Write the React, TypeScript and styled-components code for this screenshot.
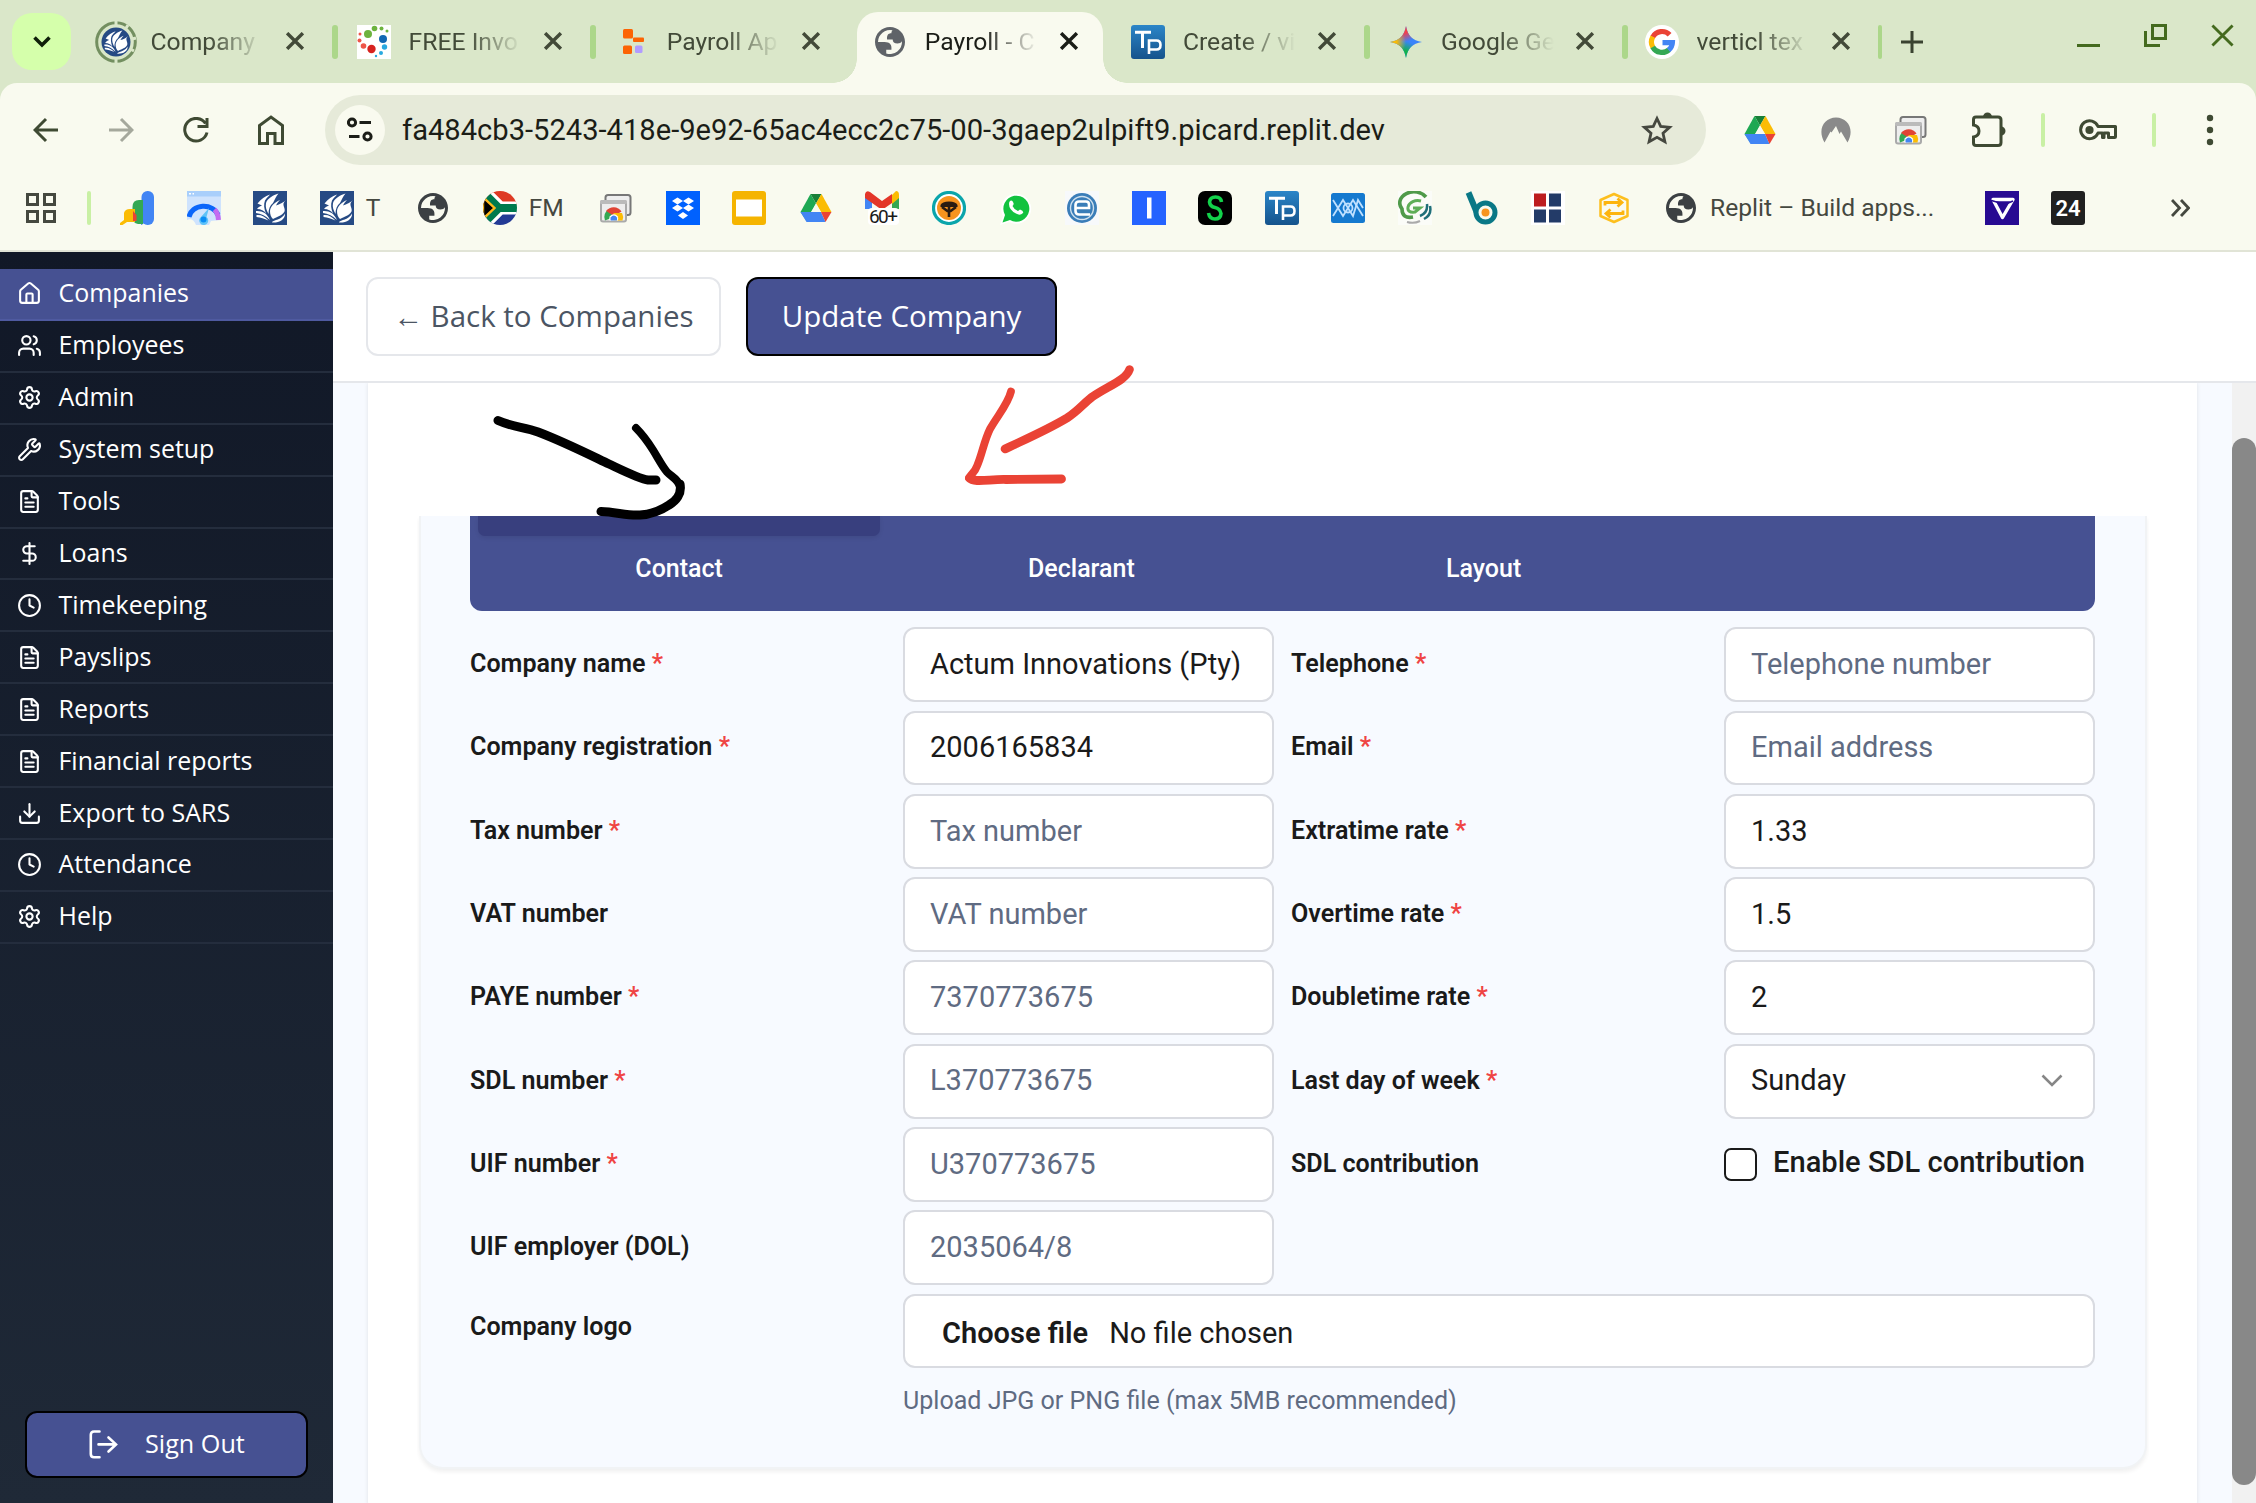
import React from "react";
import styled, { createGlobalStyle, css } from "styled-components";
import {
  House,
  Users,
  Settings,
  Wrench,
  FileText,
  DollarSign,
  Clock,
  Download,
} from "lucide-react";

const brand = "#465192";

const GlobalStyle = createGlobalStyle`
  * { box-sizing: border-box; }
  html, body { margin: 0; padding: 0; overflow: hidden; background: #fff; }
  body { font-family: Roboto, "Liberation Sans", sans-serif; }
`;

const Screen = styled.div`
  position: relative;
  width: 2256px;
  height: 1503px;
  overflow: hidden;
  display: flex;
  flex-direction: column;
`;

/* ---------- Browser chrome ---------- */

const TabStrip = styled.div`
  height: 83px;
  flex: none;
  display: flex;
  background: #dae7c9;
  padding-left: 12px;
`;

const TabSearch = styled.div`
  width: 59px;
  height: 57px;
  margin: 13px 12px 0 0;
  border-radius: 20px;
  background: #d5ffab;
  display: flex;
  align-items: center;
  justify-content: center;
`;

const Tab = styled.div<{ $active?: boolean; $short?: boolean }>`
  position: relative;
  width: ${(p) => (p.$short ? 255.6 : 258.1)}px;
  flex: none;
  height: 83px;
  display: flex;
  align-items: center;
  padding-left: 16px;
  color: ${(p) => (p.$active ? "#1b1d17" : "#424a38")};
`;

const ActiveShape = styled.div`
  position: absolute;
  left: 0;
  top: 12px;
  width: 246px;
  height: 71px;
  border-radius: 21px 21px 0 0;
  background: #f9faef;
  &::before,
  &::after {
    content: "";
    position: absolute;
    bottom: 0;
    width: 24px;
    height: 24px;
  }
  &::before {
    left: -24px;
    background: radial-gradient(circle at 0 0, transparent 23.5px, #f9faef 24px);
  }
  &::after {
    right: -24px;
    background: radial-gradient(circle at 100% 0, transparent 23.5px, #f9faef 24px);
  }
`;

const TabIcon = styled.div`
  position: relative;
  width: 34px;
  height: 34px;
  flex: none;
  display: flex;
  align-items: center;
  justify-content: center;
  svg { flex: none; }
`;

const TabTitle = styled.div`
  position: relative;
  width: 113px;
  flex: none;
  margin-left: 17.5px;
  font-size: 24.7px;
  line-height: 32px;
  white-space: nowrap;
  mask-image: linear-gradient(to right, #000 52%, transparent 100%);
`;

const TabClose = styled.div`
  position: relative;
  width: 18px;
  height: 18px;
  flex: none;
  margin: 0 0 2px 22px;
  display: flex;
`;

const TabDivider = styled.div<{ $slim?: boolean; $hidden?: boolean }>`
  width: ${(p) => (p.$slim ? 4 : 6)}px;
  height: 34px;
  flex: none;
  margin-left: 28px;
  border-radius: 3px;
  background: #acd78a;
  visibility: ${(p) => (p.$hidden ? "hidden" : "visible")};
`;

const NewTab = styled.div`
  width: 22px;
  margin-left: 16px;
  display: flex;
  align-items: center;
`;

const WindowControls = styled.div`
  margin-left: auto;
  padding: 24px 22px 0 0;
  display: flex;
  gap: 44px;
`;

const Chrome = styled.div`
  flex: none;
  height: 169px;
  background: #dae7c9;
  display: flex;
`;

const ChromeInner = styled.div`
  flex: 1;
  border-radius: 17px 17px 0 0;
  background: #f9faef;
  border-bottom: 2px solid #e1e4d6;
`;

const Toolbar = styled.div`
  height: 94px;
  display: flex;
  align-items: center;
  padding-left: 33px;
`;

const NavButtons = styled.div`
  display: flex;
  align-items: center;
  gap: 49px;
  width: 292px;
`;

const Omnibox = styled.div`
  width: 1381px;
  height: 70px;
  border-radius: 35px;
  background: #e6ead9;
  display: flex;
  align-items: center;
  padding: 0 33px 0 10px;
`;

const SiteInfo = styled.div`
  width: 50px;
  height: 50px;
  border-radius: 50%;
  background: #f9faef;
  display: flex;
  align-items: center;
  justify-content: center;
`;

const Url = styled.div`
  margin-left: 17px;
  flex: 1;
  font-size: 29.13px;
  color: #1b1d17;
  white-space: nowrap;
`;

const Extensions = styled.div`
  display: flex;
  align-items: center;
  padding-left: 37px;
`;

const Slot = styled.div<{ $w: number }>`
  width: ${(p) => p.$w}px;
  height: 36px;
  display: flex;
  align-items: center;
`;

const ToolDivider = styled.div`
  width: 4px;
  height: 34px;
  border-radius: 2px;
  background: #c9f0a4;
`;

const BookmarkBar = styled.div`
  height: 61px;
  display: flex;
  align-items: center;
  padding-left: 26px;
`;

const Bookmarks = styled.div`
  display: flex;
  align-items: center;
  gap: 32.55px;
  padding-left: 29px;
`;

const Bookmark = styled.div<{ $w?: number }>`
  width: ${(p) => p.$w ?? 34}px;
  height: 34px;
  display: flex;
  align-items: center;
  gap: 12px;
  color: #45483f;
  font-size: 24.6px;
  white-space: nowrap;
  svg { flex: none; }
`;

const Overflow = styled.div`
  margin-left: 86px;
  display: flex;
`;

/* ---------- Application ---------- */

const AppBody = styled.div`
  flex: 1;
  min-height: 0;
  display: flex;
`;

const Sidebar = styled.nav`
  width: 333px;
  flex: none;
  padding-top: 17px;
  display: flex;
  flex-direction: column;
  font-family: "Open Sans", "Noto Sans", sans-serif;
  background: linear-gradient(to bottom, #111827, #1f2937);
`;

const SideItem = styled.div<{ $active?: boolean }>`
  height: 51.92px;
  display: flex;
  align-items: center;
  gap: 16.5px;
  padding-left: 17px;
  color: #fff;
  font-size: 24.95px;
  border-bottom: 2px solid ${(p) => (p.$active ? "#4f5aa0" : "#242d3d")};
  ${(p) =>
    p.$active &&
    css`
      background: ${brand};
    `}
`;

const SideLabel = styled.span`
  padding-bottom: 3px;
`;

const SignOut = styled.div`
  width: 283px;
  height: 67px;
  margin: auto 0 25px 25px;
  border: 2px solid #000;
  border-radius: 12px;
  background: ${brand};
  color: #fff;
  font-size: 25.2px;
  display: flex;
  align-items: center;
  gap: 27px;
  padding-left: 62px;
`;

const Main = styled.main`
  flex: 1;
  display: flex;
  flex-direction: column;
`;

const ActionBar = styled.header`
  height: 131px;
  flex: none;
  border-bottom: 2px solid #e5e7eb;
  background: #fff;
  padding: 25px 0 0 33px;
  display: flex;
  gap: 25px;
`;

const ActionButton = styled.button<{ $primary?: boolean; $w: number }>`
  width: ${(p) => p.$w}px;
  height: 79px;
  padding: 0 0 2px;
  border-radius: 12px;
  border: 2px solid ${(p) => (p.$primary ? "#000" : "#e5e7eb")};
  background: ${(p) => (p.$primary ? brand : "#fff")};
  color: ${(p) => (p.$primary ? "#fff" : "#4b5563")};
  font-family: "Open Sans", "Noto Sans", sans-serif;
  font-size: 29.5px;
  display: flex;
  align-items: center;
  justify-content: center;
`;

const Scroller = styled.div`
  flex: 1;
  min-height: 0;
  display: flex;
  overflow: hidden;
  background: #f7faff;
  padding-left: 35px;
`;

const Card = styled.section`
  width: 1829px;
  height: 1132px;
  flex: none;
  background: #fff;
  border-radius: 0 0 14px 14px;
  padding: 133px 50px 0 51px;
  box-shadow: 0 0 4px rgba(0, 0, 0, 0.1);
`;

const Panel = styled.div`
  width: 1728px;
  height: 953px;
  background: #f7faff;
  border: 2px solid #f1f3f5;
  border-top: 0;
  border-radius: 0 0 24px 24px;
  padding: 0 50px 0 49px;
  box-shadow: 0 3px 4px rgba(0, 0, 0, 0.06);
  clip-path: inset(0 -2px -14px -2px);
`;

const TabsList = styled.div`
  height: 95px;
  border-radius: 0 0 12px 12px;
  background: ${brand};
  color: #fff;
  font-size: 25px;
  font-weight: 500;
  padding: 0 8px;
  display: grid;
  grid-template-columns: repeat(4, 1fr);
  grid-template-rows: 20px 64px;
`;

const SelectedEdge = styled.div`
  background: #383f7e;
  border-radius: 0 0 7px 7px;
  box-shadow: 0 2px 4px rgba(0, 0, 0, 0.08);
`;

const FormTab = styled.div<{ $col: number }>`
  grid-row: 2;
  grid-column: ${(p) => p.$col};
  display: flex;
  align-items: center;
  justify-content: center;
`;

const FormGrid = styled.div`
  margin-top: 16.3px;
  display: grid;
  grid-template-columns: 433px 371px 17px 433px 371px;
  grid-auto-rows: 74.8px;
  row-gap: 8.5px;
`;

const Label = styled.div<{ $right?: boolean; $raised?: boolean }>`
  grid-column: ${(p) => (p.$right ? 4 : 1)};
  align-self: center;
  padding-bottom: ${(p) => (p.$raised ? 9 : 2)}px;
  font-size: 25.1px;
  font-weight: 600;
  color: #1a1a1a;
`;

const Star = styled.span`
  color: #ef4444;
`;

const boxStyle = css`
  border: 2px solid #d9dbe1;
  border-radius: 12px;
  background: #fff;
  display: flex;
  align-items: center;
  font-size: 29px;
  color: #1a1a1a;
  white-space: nowrap;
`;

const Field = styled.div<{ $right?: boolean; $muted?: boolean }>`
  ${boxStyle}
  grid-column: ${(p) => (p.$right ? 5 : 2)};
  padding: 0 30px 1.5px 25px;
  justify-content: space-between;
  ${(p) => p.$muted && "color: #5f6b82;"}
`;

const FileField = styled.div`
  ${boxStyle}
  grid-column: 2 / 6;
  padding: 4px 0 0 37px;
  gap: 21px;
`;

const FileButton = styled.span`
  font-weight: 600;
`;

const CheckField = styled.div`
  grid-column: 5;
  display: flex;
  align-items: center;
  gap: 16px;
  font-size: 29.1px;
  font-weight: 500;
  color: #1a1a1a;
  white-space: nowrap;
  padding-bottom: 4px;
`;

const Box = styled.span`
  width: 33px;
  height: 33px;
  flex: none;
  margin-top: 5px;
  border: 2.5px solid #1a1a1a;
  border-radius: 7px;
  background: #fff;
`;

const Hint = styled.div`
  margin: 18px 0 0 433px;
  font-size: 25.05px;
  line-height: 30px;
  color: #5f6b82;
`;

const ScrollTrack = styled.div`
  width: 24px;
  margin-left: auto;
  background: #f1f1f1;
  padding-top: 55px;
`;

const ScrollThumb = styled.div`
  height: 1047px;
  border-radius: 12px;
  background: #888;
`;

const Ink = styled.svg`
  position: absolute;
  left: 0;
  top: 0;
`;

/* ---------- Icons ---------- */

const Svg = ({ size = 34, children }: { size?: number; children: React.ReactNode }) => (
  <svg width={size} height={size} viewBox="0 0 34 34" fill="none">
    {children}
  </svg>
);

const Cross = ({ size = 16, color = "currentColor", w = 3 }: { size?: number; color?: string; w?: number }) => (
  <svg width={size} height={size} viewBox="0 0 16 16" fill="none" stroke={color} strokeWidth={w}>
    <path d="M1 1L15 15M15 1L1 15" />
  </svg>
);

const bookLeaves = (
  <g fill="#fff">
    <path d="M17 3.500C12 5 8 8 4.500 12.500L9 14.500C6.500 15.500 5 16.500 4 18C8 18 11 19.500 13 22.500C11 18 10.500 13 12 9.500C13.500 7 15.500 5.500 17 3.500Z" />
    <path d="M25.500 2.500C20 4 14.500 7.500 13 12C12.200 16 13.500 19.500 15.500 23C15.500 18 17 14.500 20 12C21.500 9 23 5.500 25.500 2.500Z" />
    <path d="M33 9C30.500 11.500 26.500 13.500 23 14.500C24 12.500 25.500 10.500 27 9C21 11.500 17.500 15.500 17 20C17 23.500 18 26.500 20 28C24 25.500 29 25 31.500 20.500C32.500 18 30 15 30.500 12.500C31 11 32 10 33 9Z" />
    <path d="M3 20C9 19.500 14 22 17 29C12 24.500 8 22.500 3 22Z" />
    <path d="M3.500 24C8 23.500 12 25.500 15.500 29.500C11 27.500 8 26.500 3.500 26Z" />
    <path d="M19.500 30.500C24 28.500 29.500 27.500 32 22.500C32.500 28.500 26 32 19 31.500Z" />
  </g>
);

const BookIcon = () => (
  <Svg>
    <rect width="34" height="34" fill="#264a84" />
    {bookLeaves}
  </Svg>
);

const BookSpinner = () => (
  <svg width="42" height="42" viewBox="0 0 42 42" fill="none">
    <circle cx="21" cy="21" r="19.3" stroke="#738f60" strokeWidth="3" />
    <path d="M21 0V5M33 4L30.500 8M41 17L37 18M39 30L34.500 27.500M21 37V42" stroke="#dae7c9" strokeWidth="3" />
    <circle cx="21" cy="21" r="14.5" fill="#264a84" />
    <g transform="translate(7 7.500) scale(.8)">{bookLeaves}</g>
  </svg>
);

const InvoiceDots = () => (
  <Svg>
    <rect width="34" height="34" fill="#fff" />
    <g fill="#6db33f">
      <circle cx="11" cy="9" r="4" />
      <circle cx="17.5" cy="3.5" r="2.8" />
      <circle cx="24.5" cy="3.5" r="2" />
      <circle cx="30" cy="6" r="1.5" />
    </g>
    <circle cx="26" cy="14" r="4" fill="#1268b3" />
    <g fill="#29a9e0">
      <circle cx="27.5" cy="22" r="2.7" />
      <circle cx="24" cy="28" r="2" />
      <circle cx="19" cy="31" r="1.2" />
    </g>
    <circle cx="14.5" cy="24" r="4.2" fill="#d7221f" />
    <g fill="#ee5548">
      <circle cx="6.5" cy="21" r="2.8" />
      <circle cx="2.5" cy="15.5" r="2" />
      <circle cx="3" cy="9" r="1.5" />
    </g>
  </Svg>
);

const ReplitIcon = () => (
  <Svg>
    <rect x="8" y="4" width="10" height="9.5" rx="1.5" fill="#fc6404" />
    <rect x="18" y="12.5" width="11" height="4.5" rx="1" fill="#fc6404" />
    <rect x="8" y="20.5" width="9" height="8.5" rx="1.5" fill="#fc6404" />
    <rect x="20" y="20.5" width="7.5" height="7.5" rx="1.5" fill="#b19cff" />
  </Svg>
);

const Globe = ({ color = "#3c4043" }: { color?: string }) => (
  <Svg>
    <path
      transform="translate(-1 -1) scale(1.5)"
      fillRule="evenodd"
      fill={color}
      d="M12 2C6.480 2 2 6.480 2 12s4.480 10 10 10 10-4.480 10-10S17.520 2 12 2zM4 12h4.400c3.407.022 4.922 1.730 4.543 5.127H9.488v2.470a8.004 8.004 0 0 0 10.498-8.083C19.327 12.504 18.332 13 17 13c-2.137 0-3.206-.916-3.206-2.750h-3.748c-.274-2.728.683-4.092 2.870-4.092 0-.975.327-1.597.811-1.970A8.004 8.004 0 0 0 4 12z"
    />
  </Svg>
);

const TpIcon = () => (
  <Svg>
    <defs>
      <linearGradient id="tp" x1="0" y1="0" x2="0" y2="1">
        <stop offset="0" stopColor="#2b86c8" />
        <stop offset="1" stopColor="#15538c" />
      </linearGradient>
    </defs>
    <rect width="34" height="34" rx="3" fill="url(#tp)" />
    <path d="M4 7.200H20M11.500 7.200V23" stroke="#fff" strokeWidth="3" />
    <path d="M18 29V15.500H25.500Q29.500 15.500 29.500 20T25.500 24.500H18" stroke="#fff" strokeWidth="2.6" />
  </Svg>
);

const GeminiIcon = () => (
  <Svg>
    <defs>
      <clipPath id="spark">
        <path d="M17 1C18.500 10.500 23.500 15.500 33 17C23.500 18.500 18.500 23.500 17 33C15.500 23.500 10.500 18.500 1 17C10.500 15.500 15.500 10.500 17 1Z" />
      </clipPath>
      <radialGradient id="sparkRed" cx="15" cy="3" r="14" gradientUnits="userSpaceOnUse">
        <stop offset=".35" stopColor="#f4404a" />
        <stop offset="1" stopColor="#f4404a" stopOpacity="0" />
      </radialGradient>
      <radialGradient id="sparkYellow" cx="2" cy="17" r="15" gradientUnits="userSpaceOnUse">
        <stop offset=".35" stopColor="#fbbc04" />
        <stop offset="1" stopColor="#fbbc04" stopOpacity="0" />
      </radialGradient>
      <radialGradient id="sparkGreen" cx="15" cy="31" r="15" gradientUnits="userSpaceOnUse">
        <stop offset=".35" stopColor="#12b24c" />
        <stop offset="1" stopColor="#12b24c" stopOpacity="0" />
      </radialGradient>
    </defs>
    <g clipPath="url(#spark)">
      <rect width="34" height="34" fill="#3a83fa" />
      <rect width="34" height="34" fill="url(#sparkGreen)" />
      <rect width="34" height="34" fill="url(#sparkRed)" />
      <rect width="34" height="34" fill="url(#sparkYellow)" />
    </g>
  </Svg>
);

const GoogleIcon = () => (
  <Svg>
    <circle cx="17" cy="17" r="17" fill="#fff" />
    <g strokeWidth="5.2">
      <path d="M24.600 9.800A10.500 10.500 0 0 0 7.700 12.100" stroke="#ea4335" />
      <path d="M7.900 11.700A10.500 10.500 0 0 0 7.900 22.300" stroke="#fbbc05" />
      <path d="M7.700 21.900A10.500 10.500 0 0 0 24 24.700" stroke="#34a853" />
      <path d="M23.600 25.100A10.500 10.500 0 0 0 27.400 17.600H17.500" stroke="#4285f4" />
    </g>
  </Svg>
);

const DriveIcon = () => (
  <Svg>
    <path d="M11.500 3H22.500L17 12.500Z" fill="#188038" />
    <path d="M11.500 3L17 12.500L7.500 30L1.500 21Z" fill="#1ea853" />
    <path d="M22.500 3L32.500 21H22L17 12.500Z" fill="#fbbc04" />
    <path d="M1.500 21H22L26.500 31H7.500Z" fill="#4285f4" />
    <path d="M22 21H32.500L26.500 31Z" fill="#ea4335" />
    <path d="M17 12.500L22 21H12Z" fill="#f9faef" />
  </Svg>
);

const NordIcon = () => (
  <Svg>
    <path
      d="M5.500 29.500C-2 17 5 4.500 17 4.500S36 17 28.500 29.500L22 18.500L20.500 21L17 13L12.500 19.500L11.500 18.500Z"
      fill="#8a8a8a"
    />
  </Svg>
);

const CardsIcon = () => (
  <Svg>
    <rect x="6.5" y="4" width="25" height="20" rx="2.5" fill="#eee" stroke="#777" strokeWidth="2" />
    <rect x="2" y="10" width="25" height="20.5" rx="2" fill="#eee" stroke="#aaa" strokeWidth="2" />
    <rect x="1" y="9" width="27" height="4" rx="1.5" fill="#bbb" />
    <path d="M6 29.500A9 9 0 0 1 10 18L15 26Z" fill="#34a853" />
    <path d="M7 20A9.500 9.500 0 0 1 22.500 20.500L15 25Z" fill="#e04435" />
    <path d="M14.500 22H23A9 9 0 0 1 23.500 29.500H14.500Z" fill="#fbbc04" />
    <path d="M10.500 29.500A4.600 4.600 0 1 1 19 29.500Z" fill="#fff" />
    <path d="M11.800 29.500A3.400 3.400 0 1 1 17.800 29.500Z" fill="#4285f4" />
  </Svg>
);

const AdsIcon = () => (
  <Svg>
    <rect x="21.5" y="0" width="12.5" height="34" rx="6" fill="#4285f4" />
    <path d="M23 6V33L21 34Z" fill="#3674e0" />
    <path d="M12.500 16Q12.500 9 19 9H23V33H18Q12.500 32 12.500 26Z" fill="#34a853" />
    <path d="M4 22Q5 18 10 18H15V31H7L2.500 34H0V32L4 29Z" fill="#fbbc04" />
    <path d="M13 20L16.500 24V30H13Z" fill="#ea4335" />
  </Svg>
);

const SpeedIcon = () => (
  <Svg>
    <rect width="34" height="34" fill="#cfe3fd" />
    <rect width="34" height="5.5" fill="#a9cffb" />
    <path d="M2 2.800H4M5.500 2.800H7" stroke="#fff" strokeWidth="1.5" />
    <path d="M2 26A15 13 0 0 1 31 24" stroke="#0b66fa" strokeWidth="5" />
    <path d="M27.500 18.500Q31 22 31.500 29" stroke="#c46cf0" strokeWidth="5" />
    <path d="M0 29Q6 26 9 34H0Z" fill="#f9faef" />
    <path d="M24 30L34 29V34H22Z" fill="#f9faef" />
    <path d="M22 17L19.500 26A4.500 4.500 0 1 1 13 27Z" fill="#5fc3f8" />
    <circle cx="16.5" cy="28.5" r="3" fill="#0b8df5" />
  </Svg>
);

const FlagIcon = () => (
  <Svg>
    <defs>
      <clipPath id="flag">
        <circle cx="17" cy="17" r="17" />
      </clipPath>
    </defs>
    <g clipPath="url(#flag)">
      <rect width="34" height="17" fill="#de3a24" />
      <rect y="17" width="34" height="17" fill="#233a95" />
      <path d="M-2 -2L17 17L-2 36M16 17H34" stroke="#fff" strokeWidth="13" />
      <path d="M-3 -2L16 17L-3 36M15 17H34" stroke="#007a4d" strokeWidth="8" />
      <path d="M0 6L11.500 17L0 28Z" fill="#000" stroke="#ffb81c" strokeWidth="2.4" />
    </g>
  </Svg>
);

const DropboxIcon = () => (
  <Svg>
    <rect width="34" height="34" fill="#0061fe" />
    <g fill="#fff">
      <path d="M11.500 6.500L17 10L11.500 13.500L6 10Z" />
      <path d="M22.500 6.500L28 10L22.500 13.500L17 10Z" />
      <path d="M11.500 13.500L17 17L11.500 20.500L6 17Z" />
      <path d="M22.500 13.500L28 17L22.500 20.500L17 17Z" />
      <path d="M17 21L22 24.500L17 28L12 24.500Z" />
    </g>
  </Svg>
);

const SlidesIcon = () => (
  <Svg>
    <rect width="34" height="34" rx="3" fill="#f5b400" />
    <rect x="4" y="8.5" width="26" height="17" fill="#fff" />
  </Svg>
);

const GmailIcon = () => (
  <Svg>
    <path d="M0 5H7V18H0Z" fill="#4285f4" />
    <path d="M27 5H34V18H27Z" fill="#34a853" />
    <path d="M27 4L31 0Q34 0 34 4V7L27 13Z" fill="#fbbc04" />
    <path d="M0 3Q1 -1 5 1L17 10L27 3V12L17 19L0 7Z" fill="#e33629" />
    <rect x="3" y="17" width="31" height="17" rx="4" fill="#fff" />
    <text x="18.5" y="32" textAnchor="middle" fontSize="19" fontFamily="Roboto" fill="#1a1a1a" textLength="29">60+</text>
  </Svg>
);

const TreeIcon = () => (
  <Svg>
    <circle cx="17" cy="17" r="15.5" fill="#fff" stroke="#0ba5ab" strokeWidth="3.2" />
    <circle cx="17" cy="17" r="12" fill="#f7941e" />
    <path d="M8.500 14Q10 10.500 17 10.500T25.500 14V16H8.500Z" fill="#2a1c12" />
    <path d="M10 16L16 20.500M24 16L18 20.500M17 15V26" stroke="#2a1c12" strokeWidth="2.6" />
  </Svg>
);

const WhatsappIcon = () => (
  <Svg>
    <path d="M1 34L4 25A15 15 0 1 1 10 31Z" fill="#fff" />
    <path d="M3.500 31.500L6 24A13 13 0 1 1 11 29Z" fill="#12c23f" />
    <path d="M11 10Q13 8.500 14.500 12Q15 13.500 13.500 15Q15 18.500 19 20L21 18.500Q25 20 24 22Q21 25 17 22.500Q10 19 10 13Q10 11 11 10Z" fill="#fff" />
  </Svg>
);

const EIcon = () => (
  <Svg>
    <rect width="34" height="34" fill="#f7f9fb" />
    <circle cx="17" cy="17" r="15" fill="#3a7db8" />
    <circle cx="17" cy="17" r="11.5" stroke="#cfe0ee" strokeWidth="1.4" />
    <path d="M25 23.500H14Q10.500 23.500 10.500 20V14Q10.500 10.500 14 10.500H21Q24 10.500 24 13.500V17H11" stroke="#fff" strokeWidth="2.6" />
  </Svg>
);

const IIcon = () => (
  <Svg>
    <rect width="34" height="34" fill="#2563ff" />
    <rect x="15" y="6.5" width="4.5" height="21" fill="#fff" />
  </Svg>
);

const SIcon = () => (
  <Svg>
    <rect width="34" height="34" rx="7" fill="#000" />
    <path d="M23.500 11Q23 6 17.500 6T11.500 11Q12 15.500 17 16.500T23 22.500Q22.500 28 17 28T10.500 22" stroke="#12d24a" strokeWidth="3.6" />
  </Svg>
);

const WaveIcon = () => (
  <Svg>
    <rect y="2" width="34" height="30" rx="2.5" fill="#1579cf" />
    <g stroke="#bfe0ff" strokeWidth="1.8">
      <path d="M2 25L12 9L17 17L22 25L27 9L32 17" />
      <path d="M2 9L12 25L17 17L22 9L32 25" />
      <circle cx="17" cy="17" r="4.5" />
    </g>
  </Svg>
);

const GreenIcon = () => (
  <Svg>
    <rect width="34" height="34" fill="#fbfcf8" />
    <path d="M28 6A14 11 0 0 0 4 18Q4 28 15 26" stroke="#4f9a4a" strokeWidth="3.6" />
    <path d="M23 10A10 8 0 0 0 10 16Q9 22 17 21L22 17H15" stroke="#5fae58" strokeWidth="3" />
    <path d="M22 25Q30 22 29 13M26 28Q34 24 32 15" stroke="#1f6f78" strokeWidth="2.5" />
    <path d="M9 31Q16 33 22 30" stroke="#aaa" strokeWidth="2" />
  </Svg>
);

const BIcon = () => (
  <Svg>
    <path d="M4.500 1.500L13 22" stroke="#0a7886" strokeWidth="6" />
    <circle cx="21.5" cy="21.5" r="9.5" fill="#f9faef" stroke="#0a7886" strokeWidth="5" />
    <circle cx="21.5" cy="21.5" r="4" fill="#f7941e" />
  </Svg>
);

const SquaresIcon = () => (
  <Svg>
    <rect width="34" height="34" fill="#fff" />
    <rect x="3" y="2.5" width="12" height="13" fill="#bd1d20" />
    <rect x="18" y="2.5" width="12" height="13" fill="#233b68" />
    <rect x="3" y="18.5" width="12" height="13" fill="#233b68" />
    <rect x="18" y="18.5" width="12" height="13" fill="#233b68" />
  </Svg>
);

const HexIcon = () => (
  <Svg>
    <path d="M17 3L30.500 9V25L17 31L3.500 25V9Z" stroke="#fdbf1e" strokeWidth="2.5" strokeLinejoin="round" />
    <path d="M8 14.500V11.500H24M20.500 7.500L25 11.500L20.500 15.500M26 19.500V22.500H10M13.500 18.500L9 22.500L13.500 26.500" stroke="#fdb40e" strokeWidth="2.8" />
  </Svg>
);

const VIcon = () => (
  <Svg>
    <rect width="34" height="34" fill="#270a92" />
    <path d="M8 8.500H28L17.500 26.500Z" stroke="#fff" strokeWidth="3.4" strokeLinejoin="round" />
    <path d="M3 8.500L20 13.500L28 10" stroke="#270a92" strokeWidth="1.6" />
  </Svg>
);

const News24Icon = () => (
  <Svg>
    <rect width="34" height="34" rx="3" fill="#202020" />
    <text x="17" y="25" textAnchor="middle" fontSize="22" fontWeight="600" fontFamily="Roboto" fill="#fff">24</text>
  </Svg>
);

const GridIcon = () => (
  <svg width="30" height="30" viewBox="0 0 30 30" fill="none" stroke="#45483f" strokeWidth="3">
    <path d="M1.500 1.500H11.500V11.500H1.500ZM18.500 1.500H28.500V11.500H18.500ZM1.500 18.500H11.500V28.500H1.500ZM18.500 18.500H28.500V28.500H18.500Z" />
  </svg>
);

const navInk = "#3f4a33";

const SignOutIcon = () => (
  <svg width="29" height="29" viewBox="0 0 29 29" fill="none" stroke="#fff" strokeWidth="2.6" strokeLinecap="round">
    <path d="M10.500 1.500H5Q1.800 1.500 1.800 4.700V24Q1.800 27.300 5 27.300H10.500" />
    <path d="M9.500 14.400H26M19.500 7.500L27 14.400L19.500 21.500" />
  </svg>
);

/* ---------- Content ---------- */

const tabs = [
  { title: "Company", icon: <BookSpinner /> },
  { title: "FREE Invo", icon: <InvoiceDots /> },
  { title: "Payroll Ap", icon: <ReplitIcon /> },
  { title: "Payroll - C", icon: <Globe color="#5f6368" />, active: true },
  { title: "Create / vi", icon: <TpIcon /> },
  { title: "Google Ge", icon: <GeminiIcon /> },
  { title: "verticl tex", icon: <GoogleIcon /> },
];

const bookmarks: { icon: React.ReactNode; text?: string; w?: number }[] = [
  { icon: <AdsIcon /> },
  { icon: <SpeedIcon /> },
  { icon: <BookIcon /> },
  { icon: <BookIcon />, text: "T", w: 64 },
  { icon: <Globe /> },
  { icon: <FlagIcon />, text: "FM", w: 84 },
  { icon: <CardsIcon /> },
  { icon: <DropboxIcon /> },
  { icon: <SlidesIcon /> },
  { icon: <DriveIcon /> },
  { icon: <GmailIcon /> },
  { icon: <TreeIcon /> },
  { icon: <WhatsappIcon /> },
  { icon: <EIcon /> },
  { icon: <IIcon /> },
  { icon: <SIcon /> },
  { icon: <TpIcon /> },
  { icon: <WaveIcon /> },
  { icon: <GreenIcon /> },
  { icon: <BIcon /> },
  { icon: <SquaresIcon /> },
  { icon: <HexIcon /> },
  { icon: <Globe />, text: "Replit – Build apps...", w: 288 },
  { icon: <VIcon /> },
  { icon: <News24Icon /> },
];

const menu = [
  { label: "Companies", Icon: House },
  { label: "Employees", Icon: Users },
  { label: "Admin", Icon: Settings },
  { label: "System setup", Icon: Wrench },
  { label: "Tools", Icon: FileText },
  { label: "Loans", Icon: DollarSign },
  { label: "Timekeeping", Icon: Clock },
  { label: "Payslips", Icon: FileText },
  { label: "Reports", Icon: FileText },
  { label: "Financial reports", Icon: FileText },
  { label: "Export to SARS", Icon: Download },
  { label: "Attendance", Icon: Clock },
  { label: "Help", Icon: Settings },
];

type Cell = { label: string; req?: boolean; value?: string; muted?: boolean; kind?: "select" | "check" };

const rows: [Cell, Cell | null][] = [
  [
    { label: "Company name", req: true, value: "Actum Innovations (Pty)" },
    { label: "Telephone", req: true, value: "Telephone number", muted: true },
  ],
  [
    { label: "Company registration", req: true, value: "2006165834" },
    { label: "Email", req: true, value: "Email address", muted: true },
  ],
  [
    { label: "Tax number", req: true, value: "Tax number", muted: true },
    { label: "Extratime rate", req: true, value: "1.33" },
  ],
  [
    { label: "VAT number", value: "VAT number", muted: true },
    { label: "Overtime rate", req: true, value: "1.5" },
  ],
  [
    { label: "PAYE number", req: true, value: "7370773675", muted: true },
    { label: "Doubletime rate", req: true, value: "2" },
  ],
  [
    { label: "SDL number", req: true, value: "L370773675", muted: true },
    { label: "Last day of week", req: true, value: "Sunday", kind: "select" },
  ],
  [
    { label: "UIF number", req: true, value: "U370773675", muted: true },
    { label: "SDL contribution", value: "Enable SDL contribution", kind: "check" },
  ],
  [{ label: "UIF employer (DOL)", value: "2035064/8", muted: true }, null],
];

const FormCell = ({ cell, right }: { cell: Cell; right?: boolean }) => (
  <>
    <Label $right={right}>
      {cell.label}
      {cell.req && <Star> *</Star>}
    </Label>
    {cell.kind === "check" ? (
      <CheckField>
        <Box />
        {cell.value}
      </CheckField>
    ) : (
      <Field $right={right} $muted={cell.muted}>
        {cell.value}
        {cell.kind === "select" && (
          <svg width="22" height="13" viewBox="0 0 22 13" fill="none" stroke="#868686" strokeWidth="2.6">
            <path d="M1.500 1.500L11 11L20.500 1.500" />
          </svg>
        )}
      </Field>
    )}
  </>
);

export default function App() {
  return (
    <Screen>
      <GlobalStyle />
      <TabStrip>
        <TabSearch>
          <svg width="18" height="12" viewBox="0 0 18 12" fill="none" stroke="#10200a" strokeWidth="3.6">
            <path d="M1.500 1.500L9 9L16.500 1.500" />
          </svg>
        </TabSearch>
        {tabs.map((t, i) => (
          <Tab key={t.title} $active={t.active} $short={i >= 5}>
            {t.active && <ActiveShape />}
            <TabIcon>{t.icon}</TabIcon>
            <TabTitle>{t.title}</TabTitle>
            <TabClose>
              <Cross size={18} />
            </TabClose>
            <TabDivider $slim={i === 6} $hidden={i === 2 || i === 3} />
          </Tab>
        ))}
        <NewTab>
          <svg width="22" height="22" viewBox="0 0 22 22" stroke="#3a4330" strokeWidth="3">
            <path d="M11 0V22M0 11H22" />
          </svg>
        </NewTab>
        <WindowControls>
          <svg width="23" height="24" viewBox="0 0 23 24" stroke="#446a1e" strokeWidth="3">
            <path d="M0 21.500H23" />
          </svg>
          <svg width="23" height="24" viewBox="0 0 23 24" fill="none" stroke="#446a1e" strokeWidth="3">
            <path d="M8.500 1.500H21.500V14.500H8.500ZM1.500 7V21.500H16" />
          </svg>
          <Cross size={23} color="#446a1e" w={2} />
        </WindowControls>
      </TabStrip>

      <Chrome>
        <ChromeInner>
          <Toolbar>
            <NavButtons>
              <svg width="26" height="26" viewBox="0 0 26 26" fill="none" stroke={navInk} strokeWidth="3">
                <path d="M25 13H2.500M13 2L2 13L13 24" />
              </svg>
              <svg width="26" height="26" viewBox="0 0 26 26" fill="none" stroke="#a5a89c" strokeWidth="3">
                <path d="M1 13H23.500M13 2L24 13L13 24" />
              </svg>
              <svg width="26" height="26" viewBox="0 0 26 26" fill="none" stroke={navInk} strokeWidth="3">
                <path d="M22.500 6.500A11.300 11.300 0 1 0 24 15.500M24 1V9.500H14.500" />
              </svg>
              <svg width="26" height="30" viewBox="0 0 26 30" fill="none" stroke={navInk} strokeWidth="3">
                <path d="M1.500 28.500V10.500L13 2L24.500 10.500V28.500H17V18.500H9.500V28.500Z" />
              </svg>
            </NavButtons>
            <Omnibox>
              <SiteInfo>
                <svg width="26" height="26" viewBox="0 0 26 26" fill="none" stroke="#1b1d17" strokeWidth="3">
                  <circle cx="5" cy="5.5" r="3.6" />
                  <path d="M12.500 5.500H24M2 19.500H12.500" />
                  <circle cx="20.5" cy="19.5" r="3.6" />
                </svg>
              </SiteInfo>
              <Url>fa484cb3-5243-418e-9e92-65ac4ecc2c75-00-3gaep2ulpift9.picard.replit.dev</Url>
              <svg width="32" height="30" viewBox="0 0 32 30" fill="none" stroke="#45483f" strokeWidth="2.8">
                <path d="M16 3.500L19.700 11.400L28.600 12.300L22 18.200L23.900 26.800L16 22.300L8.100 26.800L10 18.200L3.400 12.300L12.300 11.400Z" />
              </svg>
            </Omnibox>
            <Extensions>
              <Slot $w={76}>
                <DriveIcon />
              </Slot>
              <Slot $w={75}>
                <NordIcon />
              </Slot>
              <Slot $w={77}>
                <CardsIcon />
              </Slot>
              <Slot $w={70}>
                <svg width="35" height="36" viewBox="0 0 35 36" fill="none">
                  <path
                    d="M5 5H27Q30 5 30 8V30.500Q30 33.500 27 33.500H5Q2.500 33.500 2.500 31V25Q8 24 8 19T2.500 13V7.500Q2.500 5 5 5Z"
                    stroke={navInk}
                    strokeWidth="3"
                  />
                  <path d="M12 5A4.500 4.500 0 0 1 21 5ZM30 14.500A4.500 4.500 0 0 1 30 23.500Z" fill={navInk} />
                </svg>
              </Slot>
              <Slot $w={38}>
                <ToolDivider />
              </Slot>
              <Slot $w={73}>
                <svg width="38" height="24" viewBox="0 0 38 24" fill="none" stroke={navInk} strokeWidth="3">
                  <path d="M19 8.500H36.500V18.500Q36.500 19.500 35.500 19.500H29.500V15H25V19.500H23.500V15H19A9 9 0 1 1 19 8.500Z" strokeLinejoin="round" />
                  <circle cx="10.5" cy="12" r="2.6" fill={navInk} />
                </svg>
              </Slot>
              <Slot $w={54}>
                <ToolDivider />
              </Slot>
              <svg width="8" height="32" viewBox="0 0 8 32" fill={navInk}>
                <circle cx="4" cy="4" r="3.2" />
                <circle cx="4" cy="16" r="3.2" />
                <circle cx="4" cy="28" r="3.2" />
              </svg>
            </Extensions>
          </Toolbar>
          <BookmarkBar>
            <Slot $w={61}>
              <GridIcon />
            </Slot>
            <ToolDivider />
            <Bookmarks>
              {bookmarks.map((b, i) => (
                <Bookmark key={i} $w={b.w}>
                  {b.icon}
                  {b.text}
                </Bookmark>
              ))}
            </Bookmarks>
            <Overflow>
              <svg width="19" height="18" viewBox="0 0 19 18" fill="none" stroke="#45483f" strokeWidth="2.8">
                <path d="M1 1L8.500 9L1 17M10 1L17.500 9L10 17" />
              </svg>
            </Overflow>
          </BookmarkBar>
        </ChromeInner>
      </Chrome>

      <AppBody>
        <Sidebar>
          {menu.map(({ label, Icon }, i) => (
            <SideItem key={label} $active={i === 0}>
              <Icon size={25} strokeWidth={2} />
              <SideLabel>{label}</SideLabel>
            </SideItem>
          ))}
          <SignOut>
            <SignOutIcon />
            <SideLabel>Sign Out</SideLabel>
          </SignOut>
        </Sidebar>
        <Main>
          <ActionBar>
            <ActionButton $w={355}>← Back to Companies</ActionButton>
            <ActionButton $primary $w={311}>
              Update Company
            </ActionButton>
          </ActionBar>
          <Scroller>
            <Card>
              <Panel>
                <TabsList>
                  <SelectedEdge />
                  <FormTab $col={1}>Contact</FormTab>
                  <FormTab $col={2}>Declarant</FormTab>
                  <FormTab $col={3}>Layout</FormTab>
                </TabsList>
                <FormGrid>
                  {rows.map(([left, right]) => (
                    <React.Fragment key={left.label}>
                      <FormCell cell={left} />
                      {right && <FormCell cell={right} right />}
                    </React.Fragment>
                  ))}
                  <Label $raised>Company logo</Label>
                  <FileField>
                    <FileButton>Choose file</FileButton>
                    <span>No file chosen</span>
                  </FileField>
                </FormGrid>
                <Hint>Upload JPG or PNG file (max 5MB recommended)</Hint>
              </Panel>
            </Card>
            <ScrollTrack>
              <ScrollThumb />
            </ScrollTrack>
          </Scroller>
        </Main>
      </AppBody>

      <Ink width="2256" height="600" viewBox="0 0 2256 600" fill="none" strokeLinecap="round" strokeLinejoin="round">
        <g stroke="#000">
          <path d="M498 420.500C512 427 525 427 538 432C562 441 588 454 609 464C628 473 640 479 648 480H656" strokeWidth="9" />
          <path d="M636 428C642 434 648 442 653 450C658 458 662 466 667 472C672 477 679 480 680 487" strokeWidth="8" />
          <path d="M680 484C682 494 676 501 669 505C660 511 650 514.500 640 515C628 516 616 512 601 511.500" strokeWidth="9" />
        </g>
        <g stroke="#ea4335">
          <path d="M1129.500 369.500C1126 380 1108 386 1092 397C1083 404 1078 411 1067 418C1047 430 1026 439 1005 449" strokeWidth="8.6" />
          <path d="M1011 391.500C1008 404 998 415 990 429C984 441 982 455 977 466C975 472 972 473 969 478" strokeWidth="7.8" />
          <path d="M969.500 478C974 483 990 479 1006 479.500L1061.500 479" strokeWidth="8.8" />
        </g>
      </Ink>
    </Screen>
  );
}
